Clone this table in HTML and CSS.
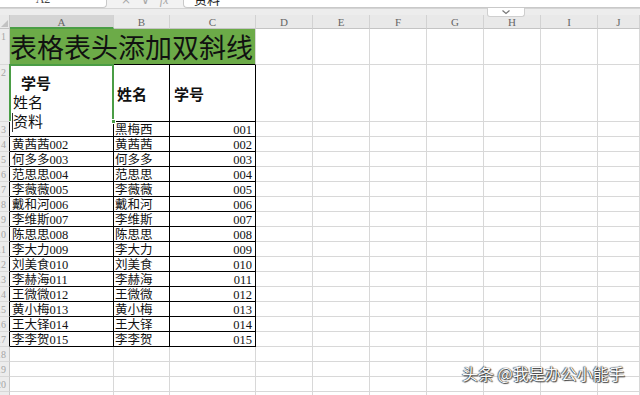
FILE: index.html
```
<!DOCTYPE html>
<html lang="zh-CN">
<head>
<meta charset="utf-8">
<title>表格表头添加双斜线</title>
<link rel="stylesheet" href="styles.css">
</head>
<body>
<div class="app">
  <div class="fbar">
    <div class="namebox"><span>A2</span></div>
    <div class="ficons"><span>×</span><span>∨</span><span class="fx">fx</span></div>
    <div class="finput"><span>资料</span></div>
  </div>
  <div class="band"></div>
  <div class="tab"><svg width="10" height="6" viewBox="0 0 10 6"><polyline points="1.5,1.5 5,4.5 8.5,1.5" fill="none" stroke="#777" stroke-width="1.2"/></svg></div>
  <div class="sheet">
    <div class="corner"></div><div class="h sel">A</div><div class="h">B</div><div class="h">C</div><div class="h">D</div><div class="h">E</div><div class="h">F</div><div class="h">G</div><div class="h">H</div><div class="h">I</div><div class="h">J</div>

    <div class="rh">1</div><div class="c title">表格表头添加双斜线</div><div class="c"></div><div class="c"></div><div class="c"></div><div class="c"></div><div class="c"></div><div class="c"></div><div class="c"></div>

    <div class="rh">2</div><div class="c a2"><div class="l1">学号</div><div class="l2">姓名</div><div class="l3">资料</div></div><div class="c k hd hb">姓名</div><div class="c k hd hc">学号</div><div class="c"></div><div class="c"></div><div class="c"></div><div class="c"></div><div class="c"></div><div class="c"></div><div class="c"></div>

    <div class="rh k">3</div><div class="c k"></div><div class="c k b">黑梅西</div><div class="c k n">001</div><div class="c"></div><div class="c"></div><div class="c"></div><div class="c"></div><div class="c"></div><div class="c"></div><div class="c"></div>
    <div class="rh k">4</div><div class="c k">黄茜茜002</div><div class="c k b">黄茜茜</div><div class="c k n">002</div><div class="c"></div><div class="c"></div><div class="c"></div><div class="c"></div><div class="c"></div><div class="c"></div><div class="c"></div>
    <div class="rh k">5</div><div class="c k">何多多003</div><div class="c k b">何多多</div><div class="c k n">003</div><div class="c"></div><div class="c"></div><div class="c"></div><div class="c"></div><div class="c"></div><div class="c"></div><div class="c"></div>
    <div class="rh k">6</div><div class="c k">范思思004</div><div class="c k b">范思思</div><div class="c k n">004</div><div class="c"></div><div class="c"></div><div class="c"></div><div class="c"></div><div class="c"></div><div class="c"></div><div class="c"></div>
    <div class="rh k">7</div><div class="c k">李薇薇005</div><div class="c k b">李薇薇</div><div class="c k n">005</div><div class="c"></div><div class="c"></div><div class="c"></div><div class="c"></div><div class="c"></div><div class="c"></div><div class="c"></div>
    <div class="rh k">8</div><div class="c k">戴和河006</div><div class="c k b">戴和河</div><div class="c k n">006</div><div class="c"></div><div class="c"></div><div class="c"></div><div class="c"></div><div class="c"></div><div class="c"></div><div class="c"></div>
    <div class="rh k">9</div><div class="c k">李维斯007</div><div class="c k b">李维斯</div><div class="c k n">007</div><div class="c"></div><div class="c"></div><div class="c"></div><div class="c"></div><div class="c"></div><div class="c"></div><div class="c"></div>
    <div class="rh k">10</div><div class="c k">陈思思008</div><div class="c k b">陈思思</div><div class="c k n">008</div><div class="c"></div><div class="c"></div><div class="c"></div><div class="c"></div><div class="c"></div><div class="c"></div><div class="c"></div>
    <div class="rh k">11</div><div class="c k">李大力009</div><div class="c k b">李大力</div><div class="c k n">009</div><div class="c"></div><div class="c"></div><div class="c"></div><div class="c"></div><div class="c"></div><div class="c"></div><div class="c"></div>
    <div class="rh k">12</div><div class="c k">刘美食010</div><div class="c k b">刘美食</div><div class="c k n">010</div><div class="c"></div><div class="c"></div><div class="c"></div><div class="c"></div><div class="c"></div><div class="c"></div><div class="c"></div>
    <div class="rh k">13</div><div class="c k">李赫海011</div><div class="c k b">李赫海</div><div class="c k n">011</div><div class="c"></div><div class="c"></div><div class="c"></div><div class="c"></div><div class="c"></div><div class="c"></div><div class="c"></div>
    <div class="rh k">14</div><div class="c k">王微微012</div><div class="c k b">王微微</div><div class="c k n">012</div><div class="c"></div><div class="c"></div><div class="c"></div><div class="c"></div><div class="c"></div><div class="c"></div><div class="c"></div>
    <div class="rh k">15</div><div class="c k">黄小梅013</div><div class="c k b">黄小梅</div><div class="c k n">013</div><div class="c"></div><div class="c"></div><div class="c"></div><div class="c"></div><div class="c"></div><div class="c"></div><div class="c"></div>
    <div class="rh k">16</div><div class="c k">王大铎014</div><div class="c k b">王大铎</div><div class="c k n">014</div><div class="c"></div><div class="c"></div><div class="c"></div><div class="c"></div><div class="c"></div><div class="c"></div><div class="c"></div>
    <div class="rh k">17</div><div class="c k">李李贺015</div><div class="c k b">李李贺</div><div class="c k n">015</div><div class="c"></div><div class="c"></div><div class="c"></div><div class="c"></div><div class="c"></div><div class="c"></div><div class="c"></div>

    <div class="rh">18</div><div class="c"></div><div class="c"></div><div class="c"></div><div class="c"></div><div class="c"></div><div class="c"></div><div class="c"></div><div class="c"></div><div class="c"></div><div class="c"></div>
    <div class="rh">19</div><div class="c"></div><div class="c"></div><div class="c"></div><div class="c"></div><div class="c"></div><div class="c"></div><div class="c"></div><div class="c"></div><div class="c"></div><div class="c"></div>
    <div class="rh">20</div><div class="c"></div><div class="c"></div><div class="c"></div><div class="c"></div><div class="c"></div><div class="c"></div><div class="c"></div><div class="c"></div><div class="c"></div><div class="c"></div>
    <div class="rh">21</div><div class="c"></div><div class="c"></div><div class="c"></div><div class="c"></div><div class="c"></div><div class="c"></div><div class="c"></div><div class="c"></div><div class="c"></div><div class="c"></div>
  </div>
  <div class="wm">头条 @我是办公小能手</div>
</div>
</body>
</html>
```
FILE: styles.css
```
html, body {
  margin: 0;
  padding: 0;
  background: #fff;
  overflow: hidden;
}
body {
  font-family: "Liberation Serif", "Noto Sans CJK SC", serif;
  color: #111;
}
.app {
  position: relative;
  width: 640px;
  height: 395px;
  overflow: hidden;
}

/* formula bar (cut off at the top) */
.fbar {
  display: flex;
  height: 8px;
  background: #f2f2f2;
  border-bottom: 1px solid #d4d4d4;
  overflow: hidden;
}
.namebox {
  width: 107px;
  box-sizing: border-box;
  background: #fff;
  border-right: 1px solid #c9c9c9;
  border-bottom: 1px solid #c9c9c9;
  border-bottom-right-radius: 4px;
  display: flex;
  align-items: flex-end;
  justify-content: center;
  padding-right: 20px;
  font-size: 12px;
  line-height: 12px;
  color: #444;
}
.namebox span { margin-bottom: 2px; }
.ficons {
  width: 76px;
  display: flex;
  align-items: flex-end;
  gap: 10px;
  padding-left: 14px;
  box-sizing: border-box;
  font-family: "DejaVu Sans", sans-serif;
  font-size: 12px;
  line-height: 12px;
  color: #a8a8a8;
}
.ficons span { margin-bottom: 2px; }
.ficons .fx { font-style: italic; font-family: "Liberation Serif", serif; }
.finput {
  flex: 1;
  background: #fff;
  border-left: 1px solid #c9c9c9;
  border-bottom: 1px solid #c9c9c9;
  border-bottom-left-radius: 4px;
  display: flex;
  align-items: flex-end;
  padding-left: 10px;
  font-family: "Noto Sans CJK SC", sans-serif;
  font-size: 13px;
  line-height: 14px;
  color: #222;
}
.finput span { margin-bottom: 1px; }

.band {
  height: 6px;
  background: #ededed;
}
.tab {
  position: absolute;
  left: 487px;
  top: 8px;
  width: 38px;
  height: 9px;
  box-sizing: border-box;
  background: #fff;
  border: 1px solid #cfcfcf;
  border-top: none;
  border-radius: 0 0 3px 3px;
  display: flex;
  align-items: center;
  justify-content: center;
}

/* sheet grid */
.sheet {
  display: grid;
  grid-template-columns: 10px 104px 56px 86px 57px 57px 57px 57px 57px 57px 1fr;
  grid-template-rows: 14px 36px 57px repeat(18, 15px) 15px;
}
.sheet > div {
  box-sizing: border-box;
  min-width: 0;
}
.corner {
  background: #e9e9e9;
  border-right: 1px solid #c8c8c8;
  border-bottom: 1px solid #c4c4c4;
  position: relative;
}
.corner::after {
  content: "";
  position: absolute;
  right: 1px;
  bottom: 1px;
  border-left: 7px solid transparent;
  border-bottom: 7px solid #c2c2c2;
}
.h {
  background: #e9e9e9;
  border-right: 1px solid #d2d2d2;
  border-bottom: 1px solid #c4c4c4;
  text-align: center;
  font-size: 11px;
  line-height: 15px;
  color: #666;
}
.h.sel {
  background: #d4d4d4;
  border-bottom: 2px solid #4a9d45;
  line-height: 14px;
}
.rh {
  background: #ececec;
  border-right: 1px solid #c8c8c8;
  border-bottom: 1px solid #d8d8d8;
  font-size: 10px;
  line-height: 15px;
  color: #a6a6a6;
  direction: rtl;
  padding-right: 3px;
  overflow: hidden;
  white-space: nowrap;
}
.rh.k { border-right-color: #000; }

.c {
  border-right: 1px solid #d8d8d8;
  border-bottom: 1px solid #d8d8d8;
  font-size: 12.5px;
  line-height: 16px;
  white-space: nowrap;
  padding-left: 2px;
}
.c.k {
  border-right-color: #000;
  border-bottom-color: #000;
}
.c.b { padding-left: 1px; }
.c.n {
  text-align: right;
  padding-right: 3px;
}

.title {
  grid-column: span 3;
  background: #6cab48;
  border-bottom-color: #000;
  padding-left: 0;
  font-family: "Noto Sans CJK SC", sans-serif;
  font-size: 27px;
  line-height: 36px;
  color: #111;
  overflow: hidden;
}

.a2 {
  position: relative;
  z-index: 1;
  padding: 10px 0 0 2px;
  font-size: 15px;
  line-height: 19px;
  border-bottom-color: transparent;
}
/* selection frame: left, top and right edges */
.a2::before {
  content: "";
  position: absolute;
  left: -1px;
  top: -1px;
  right: -1px;
  bottom: 0;
  border: 2px solid #4a9d45;
  border-bottom: none;
  pointer-events: none;
}
.a2::after {
  content: "";
  position: absolute;
  right: -3px;
  bottom: -3px;
  width: 3px;
  height: 3px;
  background: #4a9d45;
  border: 1px solid #fff;
}
.a2 .l1 { padding-left: 9px; font-weight: bold; }
.a2 .l2 { padding-left: 1px; }
.a2 .l3 { border-left: 1px solid #333; }

.hd {
  display: flex;
  align-items: center;
  padding-top: 4px;
  font-size: 15px;
  font-weight: bold;
}
.hd.hb { padding-left: 3px; }
.hd.hc { padding-left: 4px; }

.wm {
  position: absolute;
  left: 462px;
  top: 363px;
  font-family: "Noto Sans CJK SC", sans-serif;
  font-size: 16px;
  line-height: 20px;
  color: #fafafa;
  text-shadow: 0 0 1px #000, 1px 1px 1px rgba(0,0,0,0.7), -1px 0 1px rgba(0,0,0,0.5);
  white-space: nowrap;
}
```
